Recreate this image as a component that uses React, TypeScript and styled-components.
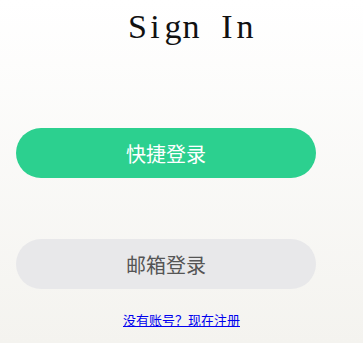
import styled, { createGlobalStyle } from "styled-components";

const GlobalStyle = createGlobalStyle`
  html, body {
    margin: 0;
    padding: 0;
  }

  body {
    min-height: 343px;
    background: linear-gradient(180deg, #ffffff 0%, #f4f3ef 100%);
    font-family: "Noto Sans CJK SC", "Noto Sans", sans-serif;
  }
`;

const title = "Sign In";

export default function App() {
  return (
    <>
      <GlobalStyle />
      <Page>
        <Title aria-label={title}>
          {title.split("").map((char, i) => (
            <Glyph key={i}>{char === " " ? "\u00a0" : char}</Glyph>
          ))}
        </Title>
        <Actions>
          <LoginButton variant="primary">快捷登录</LoginButton>
          <LoginButton variant="secondary">邮箱登录</LoginButton>
        </Actions>
        <RegisterLink href="#">没有账号？现在注册</RegisterLink>
      </Page>
    </>
  );
}

const buttonColors = {
  primary: { bg: "#2cd08f", text: "#ffffff" },
  secondary: { bg: "#e8e8ea", text: "#555555" },
};

const Page = styled.div`
  display: flex;
  flex-direction: column;
  align-items: flex-start;
  width: 363px;
  padding-top: 7px;
`;

const Title = styled.h1`
  display: flex;
  margin: 0 0 0 128px;
  font-family: "Liberation Serif", "Times New Roman", serif;
  font-weight: 400;
  font-size: 34px;
  line-height: 40px;
  color: #111111;
`;

const Glyph = styled.span`
  width: 18px;
  text-align: center;
`;

const Actions = styled.div`
  display: flex;
  flex-direction: column;
  gap: 61px;
  margin: 81px 0 0 16px;
`;

const LoginButton = styled.button<{ variant: keyof typeof buttonColors }>`
  width: 300px;
  height: 50px;
  padding: 0;
  border: none;
  border-radius: 25px;
  background-color: ${({ variant }) => buttonColors[variant].bg};
  color: ${({ variant }) => buttonColors[variant].text};
  font-family: "Noto Sans CJK SC", sans-serif;
  font-size: 20px;
`;

const RegisterLink = styled.a`
  align-self: center;
  margin-top: 21px;
  font-family: "Noto Sans CJK SC", sans-serif;
  font-size: 13px;
  line-height: 20px;
  color: #0000ee;
  text-decoration: underline;
`;
